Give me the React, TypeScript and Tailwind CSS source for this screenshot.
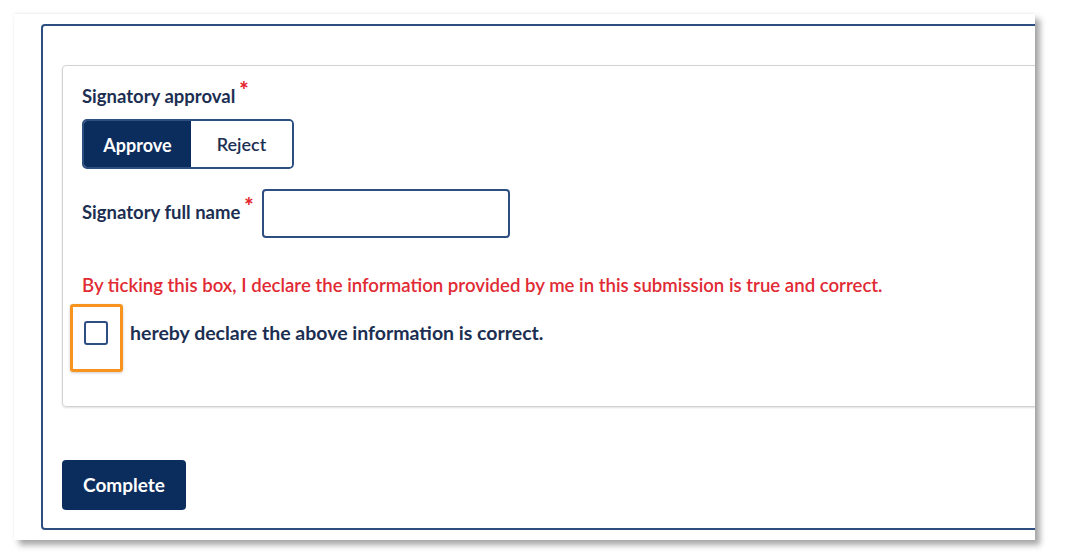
import React, { useState } from "react";

const navy = "#0b2d5e";

const App = () => {
    const [choice, setChoice] = useState<"approve" | "reject">("approve");
    const [name, setName] = useState("");
    const [agreed, setAgreed] = useState(false);

    return (
        <main
            className="min-h-[553px] w-[1068px] bg-white pl-[14px] pt-[14px]"
            style={{ fontFamily: "Lato, 'Noto Sans', sans-serif" }}
        >
            {/* screenshot frame */}
            <div className="h-[526px] w-[1021px] overflow-hidden bg-white shadow-[5px_5px_6px_rgba(0,0,0,0.35),0_-1px_3px_rgba(0,0,0,0.06)]">
                <div className="ml-[27px] mt-[10px] h-[506px] w-[1020px] rounded-[4px] border-2 border-[#2d4e80] bg-white pl-[19px] pt-[39px]">
                    {/* form panel */}
                    <section className="h-[342px] w-[990px] rounded-[4px] border border-[#d2d2d2] shadow-[0_1px_2px_rgba(0,0,0,0.12)] px-[19px] pt-[18px]">
                        <label className="flex text-[18.5px] font-bold leading-6 text-[#1c2f52]">
                            Signatory approval
                            <span className="ml-[4px] -mt-[6px] text-[22px] font-black text-[#e5252f]">*</span>
                        </label>

                        <div className="mt-[11px] flex h-[50px] w-[212px] overflow-hidden rounded-[5px] border-2 border-[#2d4e80]">
                            <button
                                onClick={() => setChoice("approve")}
                                className={`w-[107px] pt-[3px] text-[18px] font-bold ${choice === "approve" ? "bg-[#0b2d5e] text-white" : "bg-white text-[#1c2f52]"}`}
                            >
                                Approve
                            </button>
                            <button
                                onClick={() => setChoice("reject")}
                                className={`flex-1 text-[18px] font-semibold ${choice === "reject" ? "bg-[#0b2d5e] text-white" : "bg-white text-[#1c2f52]"}`}
                            >
                                Reject
                            </button>
                        </div>

                        <div className="mt-[20px] flex items-center">
                            <label className="-mt-[4px] flex text-[18.5px] font-bold leading-6 text-[#1c2f52]">
                                Signatory full name
                                <span className="ml-[4px] -mt-[6px] text-[22px] font-black text-[#e5252f]">*</span>
                            </label>
                            <input
                                value={name}
                                onChange={(e) => setName(e.target.value)}
                                className="ml-[8px] h-[49px] w-[248px] rounded-[4px] border-2 border-[#2d4e80] px-3 outline-none"
                            />
                        </div>

                        <p className="mt-[35px] text-[18.6px] font-semibold leading-6 text-[#e12a33]">
                            By ticking this box, I declare the information provided by me in this submission is true and correct.
                        </p>

                        {/* declaration row, orange box is a highlight drawn over it */}
                        <div className="relative mt-[24px] flex items-center">
                            <button
                                onClick={() => setAgreed(!agreed)}
                                className="ml-[2px] flex h-[24px] w-[24px] items-center justify-center rounded-[3px] border-2 border-[#2d4e80] bg-white"
                            >
                                {agreed && (
                                    <svg width="16" height="16" viewBox="0 0 24 24" fill="none" stroke={navy} strokeWidth="3">
                                        <path d="M5 12l5 5 9-10" />
                                    </svg>
                                )}
                            </button>
                            <span className="ml-[22px] text-[19.5px] font-bold leading-6 text-[#1c2f52]">
                                hereby declare the above information is correct.
                            </span>
                            <div className="pointer-events-none absolute left-[-12px] top-[-17px] h-[68px] w-[53px] rounded-[3px] border-[3px] border-[#f7941d] shadow-[0_1px_3px_rgba(0,0,0,0.2)]" />
                        </div>
                    </section>

                    <button className="mt-[53px] h-[50px] w-[124px] rounded-[4px] bg-[#0b2d5e] text-[19px] font-bold text-white">
                        Complete
                    </button>
                </div>
            </div>
        </main>
    );
};

export default App;
